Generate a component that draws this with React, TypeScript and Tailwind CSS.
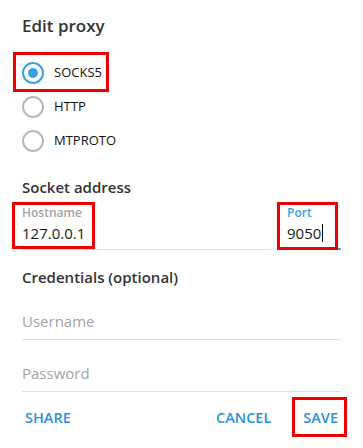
import type { ReactNode } from 'react';

const font = { fontFamily: '"Open Sans", "Noto Sans", sans-serif' };

// red annotation frame drawn over a piece of content
function Marked({ children, className, wrap = '' }: { children: ReactNode; className: string; wrap?: string }) {
  return (
    <div className={`relative ${wrap}`}>
      {children}
      <span className={`pointer-events-none absolute border-[3px] border-[#ee0000] ${className}`} />
    </div>
  );
}

function Radio({ label, checked }: { label: string; checked?: boolean }) {
  return (
    <div className="flex h-[34px] items-center">
      <span
        className={`flex h-[22px] w-[22px] items-center justify-center rounded-full border-[2px] ${
          checked ? 'border-[#3b9fe0]' : 'border-[#b8b8b8]'
        }`}
      >
        {checked && <span className="h-[10px] w-[10px] rounded-full bg-[#3b9fe0]" />}
      </span>
      <span className="ml-[10px] text-[13px] text-[#111]">{label}</span>
    </div>
  );
}

function Field({ placeholder }: { placeholder: string }) {
  return (
    <div className="flex h-[52px] items-end border-b border-[#e0e0e0] pb-[8px]">
      <span className="text-[15px] leading-[20px] text-[#a3a3a3]">{placeholder}</span>
    </div>
  );
}

export default function App() {
  return (
    <div className="h-[448px] w-[363px] bg-white px-[22px]" style={font}>
      <h1 className="pt-[14px] text-[17px] font-semibold leading-[24px] text-[#333]">Edit proxy</h1>

      <div className="mt-[18px]">
        <Marked className="-left-[9px] -top-[4px] h-[40px] w-[96px]">
          <Radio label="SOCKS5" checked />
        </Marked>
        <Radio label="HTTP" />
        <Radio label="MTPROTO" />
      </div>

      <h2 className="mt-[18px] text-[15px] font-semibold leading-[22px] text-[#333]">Socket address</h2>

      <div className="mt-[7px] flex items-end">
        <div className="flex-1 border-b border-[#e0e0e0]">
          <Marked className="-left-[10px] -top-[3px] h-[47px] w-[83px]">
            <div className="text-[12px] font-semibold leading-[16px] text-[#a3a3a3]">Hostname</div>
            <div className="pb-[4px] text-[15px] leading-[24px] text-[#1a1a1a]">127.0.0.1</div>
          </Marked>
        </div>
        <div className="ml-[17px] w-[54px] border-b-2 border-[#3b9fe0]">
          <Marked className="-left-[10px] -top-[3px] h-[48px] w-[61px]">
            <div className="text-[12px] font-semibold leading-[16px] text-[#3b9fe0]">Port</div>
            <div className="flex items-center pb-[3px] text-[15px] leading-[24px] text-[#1a1a1a]">
              9050
              <span className="ml-[1px] h-[18px] w-px bg-black" />
            </div>
          </Marked>
        </div>
      </div>

      <h2 className="mt-[16px] text-[15px] font-semibold leading-[22px] text-[#333]">Credentials (optional)</h2>

      <Field placeholder="Username" />
      <Field placeholder="Password" />

      <div className="mt-[16px] flex items-center text-[14.5px] font-semibold leading-[20px] text-[#2a92dc]">
        <button className="ml-[3px]">SHARE</button>
        <button className="ml-auto">CANCEL</button>
        <Marked wrap="ml-[32px] mr-[3px]" className="-left-[11px] -top-[11px] h-[40px] w-[55px]">
          <button>SAVE</button>
        </Marked>
      </div>
    </div>
  );
}
